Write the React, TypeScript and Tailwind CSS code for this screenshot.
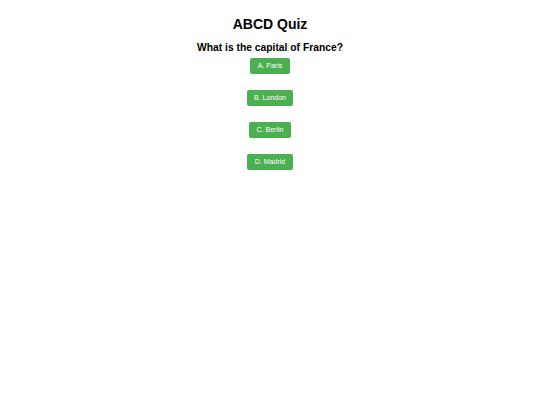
const OPTIONS = ['A. Paris', 'B. London', 'C. Berlin', 'D. Madrid']

export default function App() {
  return (
    <div className="min-h-[405px] bg-white text-black font-['Liberation_Sans',Arial,sans-serif] text-center">
      <h1 className="pt-[16px] text-[14px] leading-[16px] font-bold">ABCD Quiz</h1>
      <h2 className="mt-[10px] text-[10.3px] leading-[12px] font-bold">What is the capital of France?</h2>
      <div className="mt-[4px] flex flex-col items-center gap-[16px]">
        {OPTIONS.map((o) => (
          <button
            key={o}
            className="h-[16px] px-[7.5px] rounded-[2px] bg-[#4caf50] text-white text-[7px] leading-[16px]"
          >
            {o}
          </button>
        ))}
      </div>
    </div>
  )
}
